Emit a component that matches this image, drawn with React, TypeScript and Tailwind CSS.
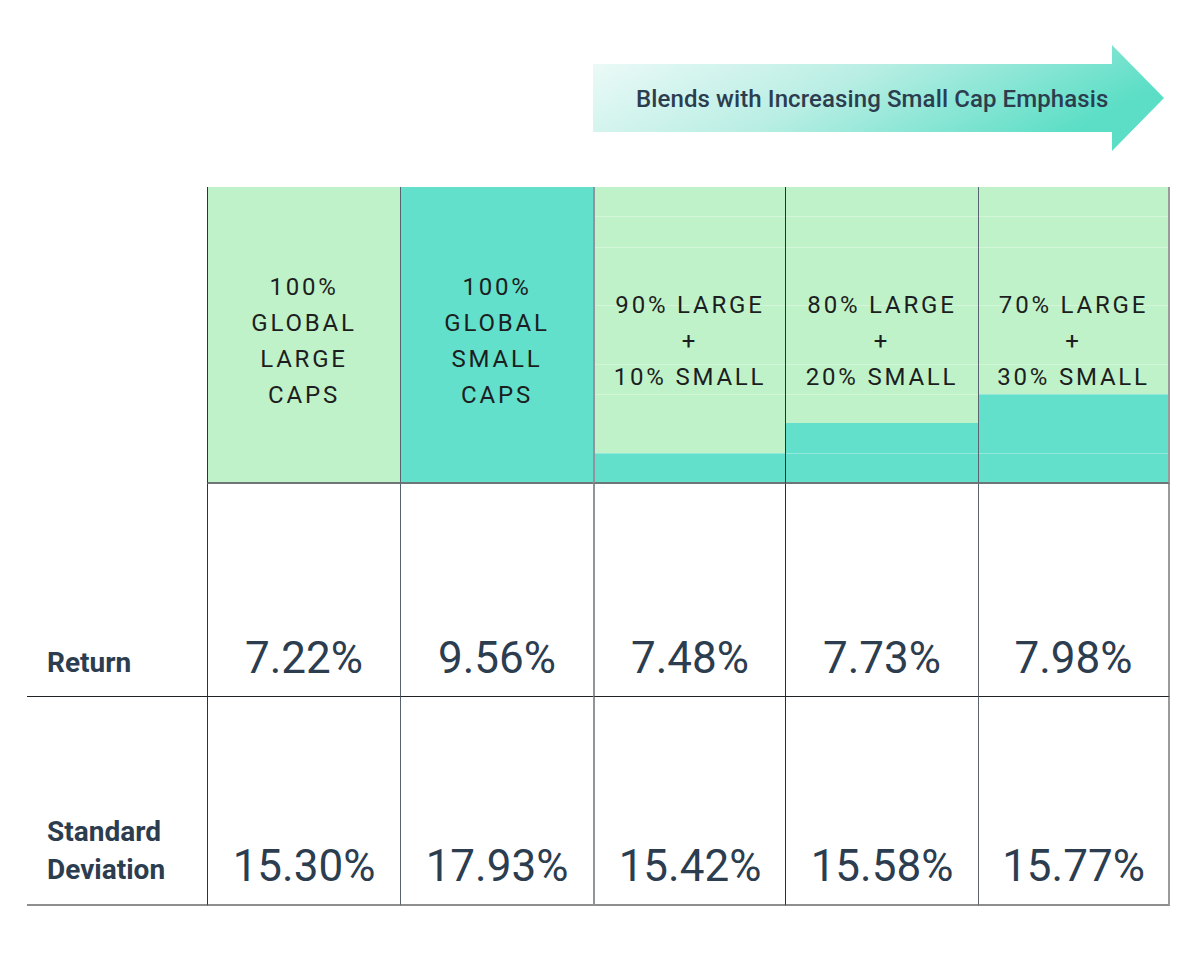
const font = "font-['Roboto','Liberation_Sans',sans-serif]";

const columns = [
  { label: ['100%', 'GLOBAL', 'LARGE', 'CAPS'], bg: 'bg-[#c0f2c9]', bar: 'h-0', edge: 'border-l border-[#2f3338]', grid: false, ret: '7.22%', sd: '15.30%' },
  { label: ['100%', 'GLOBAL', 'SMALL', 'CAPS'], bg: 'bg-[#62e0cb]', bar: 'h-0', edge: 'border-l border-[#59636e]', grid: false, ret: '9.56%', sd: '17.93%' },
  { label: ['90% LARGE', '+', '10% SMALL'], bg: 'bg-[#c0f2c9]', bar: 'h-[29px]', edge: 'border-l-2 border-[#8f959c]', grid: true, ret: '7.48%', sd: '15.42%' },
  { label: ['80% LARGE', '+', '20% SMALL'], bg: 'bg-[#c0f2c9]', bar: 'h-[59px]', edge: 'border-l border-[#2a2e33]', grid: true, ret: '7.73%', sd: '15.58%' },
  { label: ['70% LARGE', '+', '30% SMALL'], bg: 'bg-[#c0f2c9]', bar: 'h-[88px]', edge: 'border-l border-[#5a6470] border-r-2 border-r-[#9a9a9a]', grid: true, ret: '7.98%', sd: '15.77%' },
];

// faint chart gridlines behind the blend columns (offset from header top)
const gridLines = ['top-[29px]', 'top-[60px]', 'top-[118px]', 'top-[177px]', 'top-[207px]', 'top-[266px]'];

function Arrow() {
  return (
    <div className="relative ml-[593px] h-[106px] w-[571px]">
      <svg className="absolute inset-0" width="571" height="106" viewBox="0 0 571 106">
        <defs>
          <linearGradient id="arrowFill" x1="0" y1="0" x2="1" y2="0.35">
            <stop offset="0" stopColor="#f1fbf9" />
            <stop offset="0.5" stopColor="#b9eee4" />
            <stop offset="1" stopColor="#5cdec6" />
          </linearGradient>
        </defs>
        <polygon points="0,19 519,19 519,0 571,53 519,106 519,87 0,87" fill="url(#arrowFill)" />
      </svg>
      <div className="relative flex h-full items-center pl-[43px] pt-[1px]">
        <span className={`${font} text-[24px] font-medium tracking-[0.1px] text-[#2c3d4f]`}>
          Blends with Increasing Small Cap Emphasis
        </span>
      </div>
    </div>
  );
}

export default function App() {
  return (
    <div className={`${font} h-[972px] w-[1201px] bg-white pt-[45px]`}>
      <Arrow />

      <div className="mt-[36px] grid grid-cols-[207px_193px_193px_192px_193px_192px] grid-rows-[297px_213px_209px]">
        {/* header row */}
        <div />
        {columns.map((c, i) => (
          <div key={i} className={`relative ${c.bg} ${c.edge} border-b-2 border-b-[#6d7576]`}>
            <div className={`absolute inset-x-0 bottom-0 bg-[#62e0cb] ${c.bar}`} />
            {c.grid &&
              gridLines.map((g) => (
                <div key={g} className={`absolute inset-x-0 h-px bg-white/30 ${g}`} />
              ))}
            <div className="relative flex h-full flex-col items-center justify-center pt-3">
              {c.label.map((l) => (
                <span key={l} className="text-[24px] leading-[36px] tracking-[2.8px] text-[#1c1e21] whitespace-nowrap">
                  {l}
                </span>
              ))}
            </div>
          </div>
        ))}

        {/* return row */}
        <div className="pl-[27px]">
          <div className="flex h-full items-end border-b border-[#1f2326] pb-[19px] pl-5">
            <span className="text-[28px] font-bold leading-[28px] text-[#2c3d4f]">Return</span>
          </div>
        </div>
        {columns.map((c, i) => (
          <div key={i} className={`flex items-end justify-center border-b border-b-[#1f2326] pb-4 ${c.edge}`}>
            <span className="text-[44px] leading-[44px] text-[#2c3d4f]">{c.ret}</span>
          </div>
        ))}

        {/* standard deviation row */}
        <div className="pl-[27px]">
          <div className="flex h-full items-end border-b-2 border-[#8e8e8e] pb-[15px] pl-5">
            <span className="text-[28px] font-bold leading-[38px] text-[#2c3d4f]">
              Standard
              <br />
              Deviation
            </span>
          </div>
        </div>
        {columns.map((c, i) => (
          <div key={i} className={`flex items-end justify-center border-b-2 border-b-[#8e8e8e] pb-[16px] ${c.edge}`}>
            <span className="text-[44px] leading-[44px] text-[#2c3d4f]">{c.sd}</span>
          </div>
        ))}
      </div>
    </div>
  );
}
